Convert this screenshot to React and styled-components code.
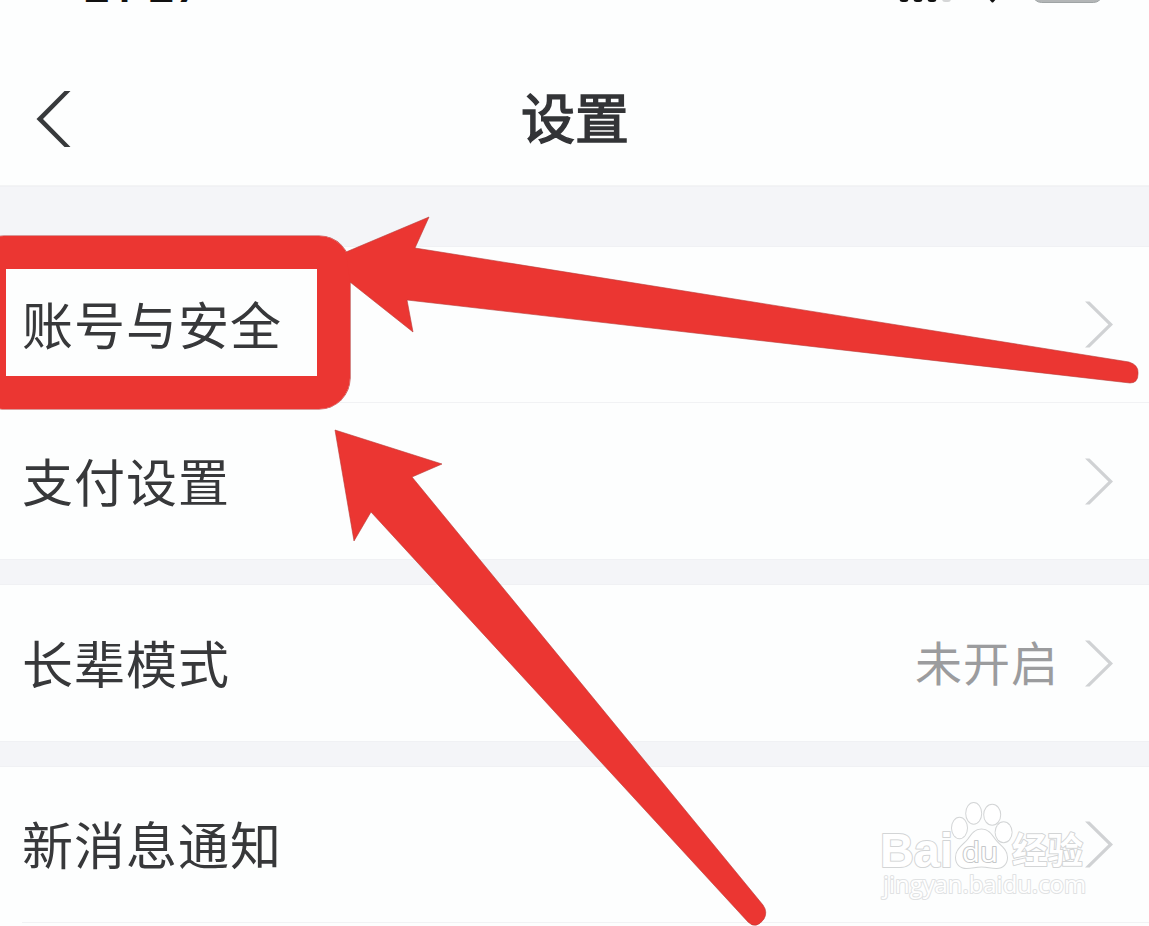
import React from 'react';
import styled, { createGlobalStyle } from 'styled-components';

const RED = '#eb3632';
const RED_EDGE = '#b93a38';
const SURFACE = '#fdfefe';

const GlobalStyle = createGlobalStyle`
  * {
    box-sizing: border-box;
  }
  body {
    margin: 0;
    background: ${SURFACE};
    font-family: 'Liberation Sans', 'Noto Sans CJK SC', sans-serif;
  }
`;

const Screen = styled.div`
  position: relative;
  width: 1149px;
  height: 926px;
  overflow: hidden;
  background: ${SURFACE};
`;

const StatusBar = styled.div`
  display: flex;
  align-items: flex-end;
  justify-content: space-between;
  height: 5px;
  padding: 0 47px 0 83px;
  overflow: hidden;
`;

const Clock = styled.div`
  display: flex;
  height: 38px;
  line-height: 38px;
  font-family: 'Inter', sans-serif;
  font-size: 44px;
  font-weight: 600;
  letter-spacing: 1.5px;
  color: #111;
`;

const Colon = styled.span`
  transform: translateY(-5px);
`;

const StatusIcons = styled.svg`
  display: block;
  width: 206px;
  height: 5px;
`;

const NavBar = styled.header`
  display: grid;
  grid-template-columns: 120px 1fr 120px;
  align-items: center;
  height: 181px;
  padding-top: 47px;
  border-bottom: 1px solid #f3f4f5;
`;

const BackIcon = styled.svg`
  width: 40px;
  height: 60px;
  margin-left: 34px;
`;

const Title = styled.h1`
  margin: -5px 0 0 1px;
  text-align: center;
  font-family: 'Noto Sans CJK SC', sans-serif;
  font-size: 54px;
  line-height: 60px;
  font-weight: 400;
  -webkit-text-stroke: 1.5px #333437;
  color: #333437;
`;

const Gap = styled.div`
  height: ${props => props.size}px;
  background: #f4f5f8;
  border-top: 1px solid #f0f1f4;
  border-bottom: 1px solid #f0f1f4;
`;

const Group = styled.section`
  display: flex;
  flex-direction: column;
`;

const Row = styled.div`
  display: flex;
  align-items: center;
  height: ${props => props.size}px;
  padding: 0 36px 0 22px;
`;

const Divider = styled.div`
  height: 1px;
  margin-left: ${props => props.inset || 0}px;
  background: #f1f2f4;
`;

const Label = styled.span`
  flex: 1;
  margin-top: -3px;
  font-family: 'Noto Sans CJK SC', sans-serif;
  font-size: 51px;
  letter-spacing: 1px;
  line-height: 60px;
  color: #37383a;
`;

const Value = styled.span`
  margin: -5px 26px 0 0;
  font-family: 'Noto Sans CJK SC', sans-serif;
  font-size: 47px;
  letter-spacing: 1px;
  line-height: 60px;
  color: #9b9c9e;
`;

const ChevronIcon = styled.svg`
  width: 28px;
  height: 47px;
`;

const Highlight = styled.div`
  position: absolute;
  left: -27px;
  top: 236px;
  width: 377px;
  height: 173px;
  border: 33px solid ${RED};
  border-radius: 31px;
  box-shadow: 0 0 0 0.6px ${RED_EDGE};
`;

const Arrows = styled.svg`
  position: absolute;
  left: 0;
  top: 0;
  fill: ${RED};
  stroke: ${RED_EDGE};
  stroke-width: 0.6;
`;

const Watermark = styled.svg`
  position: absolute;
  left: 870px;
  top: 790px;
  fill: #fff;
  stroke: #d3d5d6;
  stroke-width: 2;
  stroke-linejoin: round;
  paint-order: stroke;
  font-family: 'Open Sans', 'Noto Sans CJK SC', sans-serif;
`;

const LogoLatin = styled.text`
  font-family: 'Liberation Sans', sans-serif;
  font-size: 48px;
  font-weight: 700;
`;

const LogoPaw = styled.text`
  font-size: 28px;
  font-weight: 400;
  stroke: #c6c8ca;
`;

const LogoHan = styled.text`
  font-family: 'Noto Sans CJK SC', sans-serif;
  font-size: 36px;
  font-weight: 700;
`;

const LogoUrl = styled.text`
  font-size: 24px;
  stroke: #e0e2e3;
`;

const Chevron = () => (
  <ChevronIcon viewBox="0 0 28 47">
    <path d="M0 0.500h4.500L28 23.500 4.500 46.500H0L23.400 23.500z" fill="#d0d2d4" />
  </ChevronIcon>
);

const SettingRow = ({ label, value, size = 156 }) => (
  <Row size={size}>
    <Label>{label}</Label>
    {value && <Value>{value}</Value>}
    <Chevron />
  </Row>
);

const Logo = () => (
  <Watermark width="230" height="120" viewBox="0 0 230 120">
    <LogoLatin x="10" y="76.500" textLength="73" lengthAdjust="spacingAndGlyphs">Bai</LogoLatin>
    <ellipse cx="89.500" cy="38" rx="7.500" ry="10.300" />
    <ellipse cx="103.700" cy="23.400" rx="7.500" ry="10.300" />
    <ellipse cx="122.200" cy="24.700" rx="8" ry="10" />
    <ellipse cx="133.600" cy="42.200" rx="8" ry="10" />
    <path d="M111.500 39.500C105 39.500 102 44 98.500 49C94.500 54.500 86 58.500 86 67.500C86 74 90.500 78 96.500 78C102 78 106 76.500 111.500 76.500C117 76.500 121 78 126.500 78C133 78 137 73.500 137 67.500C137 58.500 128 54.500 124.500 49C121 44 118 39.500 111.500 39.500Z" />
    <LogoPaw x="92" y="71.500" textLength="36" lengthAdjust="spacingAndGlyphs">du</LogoPaw>
    <LogoHan x="142" y="74" textLength="71" lengthAdjust="spacingAndGlyphs">经验</LogoHan>
    <LogoUrl x="13" y="103" textLength="203" lengthAdjust="spacingAndGlyphs">jingyan.baidu.com</LogoUrl>
  </Watermark>
);

export default function App() {
  return (
    <>
      <GlobalStyle />
      <Screen>
        <StatusBar>
          <Clock>
            <span>21</span>
            <Colon>:</Colon>
            <span>27</span>
          </Clock>
          <StatusIcons viewBox="0 0 206 5">
            {/* signal bars, wifi and battery, cut off by the top edge */}
            <rect x="3.500" y="-10" width="9" height="12" rx="3" fill="#111" />
            <rect x="17.500" y="-10" width="9" height="12" rx="3" fill="#111" />
            <rect x="31.500" y="-10" width="9" height="12" rx="3" fill="#111" />
            <rect x="46" y="-10" width="9" height="12" rx="3" fill="#d5d6d7" />
            <path d="M92 -2h9l-3.500 4q-1 1-2 0z" fill="#111" />
            <rect x="136.500" y="-28" width="70" height="30.500" rx="9" fill="#b3b6b7" stroke="#9fa4a5" />
          </StatusIcons>
        </StatusBar>
        <NavBar>
          <BackIcon viewBox="0 0 40 60">
            <path d="M30.500 2h6L9 30l27.500 28h-6L2.500 30z" fill="#37393b" />
          </BackIcon>
          <Title>设置</Title>
        </NavBar>
        <Gap size={61} />
        <Group>
          <SettingRow label="账号与安全" size={155} />
          <Divider />
          <SettingRow label="支付设置" />
        </Group>
        <Gap size={26} />
        <Group>
          <SettingRow label="长辈模式" value="未开启" />
        </Group>
        <Gap size={26} />
        <Group>
          <SettingRow label="新消息通知" size={155} />
          <Divider inset={22} />
        </Group>
        <Highlight />
        <Arrows width="1149" height="926" viewBox="0 0 1149 926">
          {/* left open at the tip, where it merges into the highlight frame */}
          <path d="M346 252L429 217L415 248L1129 362Q1139 365 1138 374Q1138 383 1130 383L407 300L413 332L350 282" />
          <path d="M335 430L442 464L412 477L763 905Q768 912 764 919Q756 930 748 922L371 512L354 541Z" />
        </Arrows>
        <Logo />
      </Screen>
    </>
  );
}
